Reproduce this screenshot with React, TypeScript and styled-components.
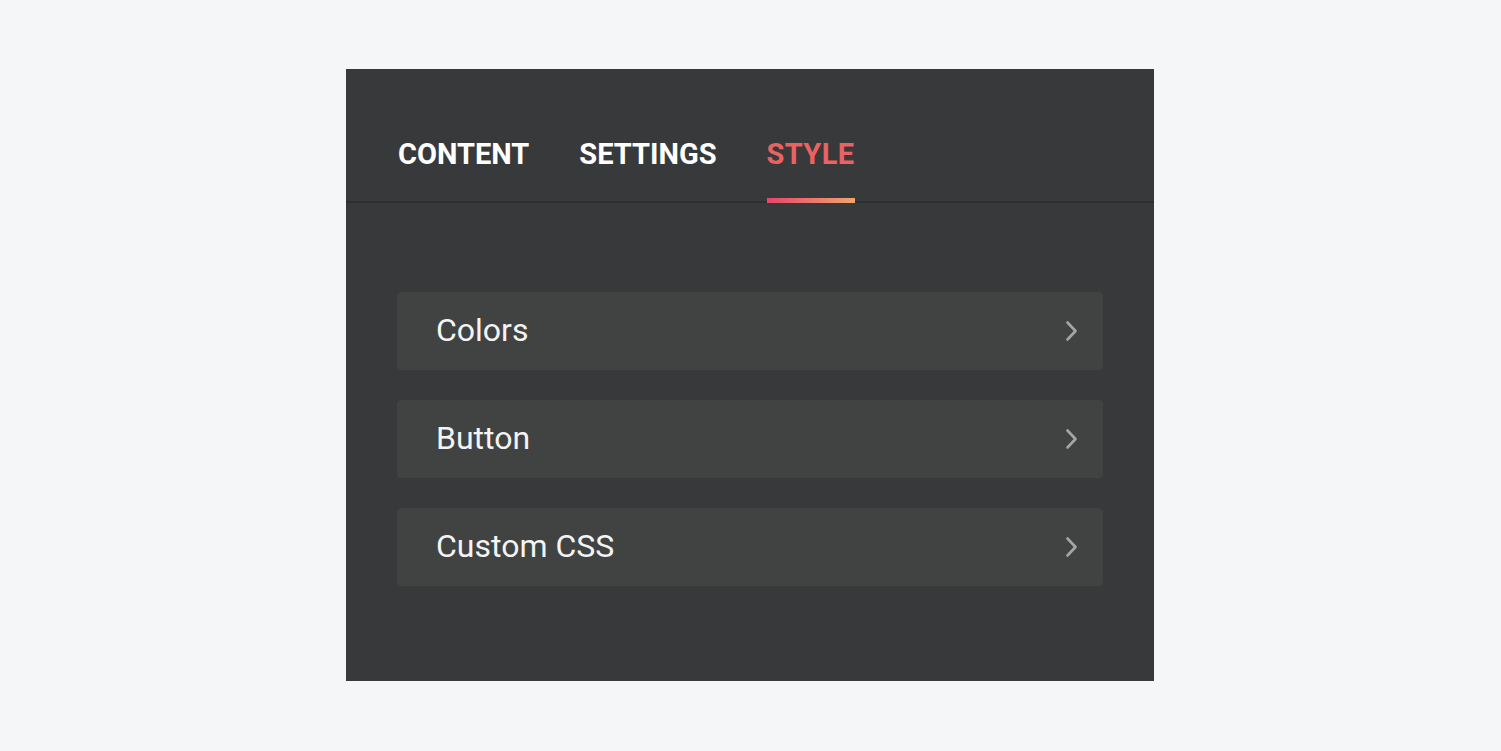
import React from "react";
import styled, { createGlobalStyle } from "styled-components";

const Global = createGlobalStyle`
  html, body { margin: 0; padding: 0; background: #f5f6f8; }
  body { font-family: Roboto, "Noto Sans", sans-serif; }
`;

const Page = styled.div`
  width: 1501px;
  height: 751px;
  box-sizing: border-box;
  padding-top: 69px;
  padding-left: 346px;
`;

const Panel = styled.div`
  width: 808px;
  height: 612px;
  background: #38393b;
  display: flex;
  flex-direction: column;
`;

const TabBar = styled.div`
  display: flex;
  gap: 50px;
  padding: 0 52px;
  align-items: flex-end;
  border-bottom: 2px solid #2d2e2f;
  box-sizing: border-box;
  height: 134px;
`;

const Tab = styled.div<{ $active?: boolean }>`
  position: relative;
  font-family: Roboto, sans-serif;
  font-weight: 700;
  font-size: 29px;
  letter-spacing: ${(p) => (p.$active ? "0.4px" : "0")};
  color: ${(p) => (p.$active ? "#ea6262" : "#ffffff")};
  padding-bottom: 31px;
  line-height: 32px;
  &::after {
    content: "";
    display: ${(p) => (p.$active ? "block" : "none")};
    position: absolute;
    left: 0;
    right: 0;
    bottom: -2px;
    height: 5px;
    background: linear-gradient(90deg, #e8456c, #f0a56c);
  }
`;

const List = styled.div`
  display: flex;
  flex-direction: column;
  gap: 30px;
  padding: 89px 51px 0 51px;
`;

const Row = styled.div`
  height: 78px;
  background: #414342;
  border-radius: 4px;
  display: flex;
  align-items: center;
  justify-content: space-between;
  padding: 0 24px 0 39px;
`;

const Label = styled.span`
  font-family: Roboto, sans-serif;
  font-size: 32px;
  line-height: 38px;
  margin-top: -3px;
  color: #f4f4f4;
`;

const Chevron = () => (
  <svg width="15" height="22" viewBox="0 0 15 22" fill="none">
    <path d="M3.5 2.5 L11.5 11 L3.5 19.5" stroke="#a6a6a6" strokeWidth="2.6" strokeLinecap="round" strokeLinejoin="round" />
  </svg>
);

export default function App() {
  return (
    <>
      <Global />
      <Page>
        <Panel>
          <TabBar>
            <Tab>CONTENT</Tab>
            <Tab>SETTINGS</Tab>
            <Tab $active>STYLE</Tab>
          </TabBar>
          <List>
            {["Colors", "Button", "Custom CSS"].map((t) => (
              <Row key={t}>
                <Label>{t}</Label>
                <Chevron />
              </Row>
            ))}
          </List>
        </Panel>
      </Page>
    </>
  );
}
